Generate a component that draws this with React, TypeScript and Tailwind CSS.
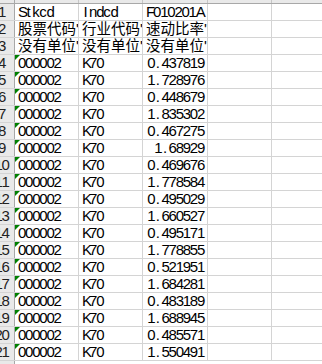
const cols = ["A", "B", "C", "D", "E"];

const values = [
  "0.437819", "1.728976", "0.448679", "1.835302", "0.467275", "1.68929",
  "0.469676", "1.778584", "0.495029", "1.660527", "0.495171", "1.778855",
  "0.521951", "1.684281", "0.483189", "1.688945", "0.485571", "1.550491",
];

type Row = { a: string; b: string; c: string; num?: boolean };

const rows: Row[] = [
  { a: "Stkcd", b: "Indcd", c: "F010201A" },
  { a: "股票代码'", b: "行业代码'", c: "速动比率'" },
  { a: "没有单位'", b: "没有单位'", c: "没有单位'" },
  ...values.map((v) => ({ a: "000002", b: "K70", c: v, num: true })),
];

// half-width latin like the SimSun cells in excel
function Txt({ s }: { s: string }) {
  return (
    <>
      {Array.from(s).map((ch, i) =>
        ch === "'" ? (
          <span key={i} className="inline-block w-[3px]">{ch}</span>
        ) : ch.charCodeAt(0) < 128 ? (
          <span key={i} className="inline-block w-[7.1px] text-center">{ch}</span>
        ) : (
          <span key={i} className="text-[14.5px]">{ch}</span>
        )
      )}
    </>
  );
}

function Cell({ w, s, right, flag }: { w: string; s?: string; right?: boolean; flag?: boolean }) {
  return (
    <div className={`${w} relative shrink-0 h-full border-r border-[#d4d4d4] px-[3px] flex items-end overflow-hidden whitespace-nowrap ${right ? "justify-end" : ""}`}>
      {flag && (
        <div className="absolute left-0 top-0 w-0 h-0 border-t-[5px] border-r-[5px] border-t-[#008000] border-r-transparent" />
      )}
      {s && (
        <span className="leading-[16px]">
          <Txt s={s} />
        </span>
      )}
    </div>
  );
}

export default function App() {
  return (
    <div className="w-[322px] h-[364px] overflow-hidden bg-white text-[15px] text-black" style={{ fontFamily: '"Liberation Sans", Arial, "Noto Sans CJK SC", sans-serif' }}>
      <div className="-mt-[13px] -ml-[11px]">
        {/* column header */}
        <div className="flex h-[17px] bg-[#e9e9e9] border-b border-[#a8a8a8]">
          <div className="w-[26px] shrink-0 border-r border-[#a8a8a8]" />
          {cols.map((c, i) => (
            <div key={c} className={`${i === 2 ? "w-[65px]" : "w-[64px]"} shrink-0 border-r border-[#c6c6c6] flex items-center justify-center text-[#333]`}>
              {c}
            </div>
          ))}
        </div>
        {rows.map((r, i) => (
          <div key={i} className="flex h-[17px] border-b border-[#d4d4d4]">
            <div className="w-[26px] shrink-0 bg-[#e9e9e9] border-r border-[#a8a8a8] flex items-end justify-center leading-[16px] text-[#222]">
              <Txt s={String(i + 1)} />
            </div>
            <Cell w="w-[64px]" flag={r.num} s={r.a} />
            <Cell w="w-[64px]" s={r.b} />
            <Cell w="w-[65px]" right={r.num} s={r.c} />
            <Cell w="w-[64px]" />
            <Cell w="w-[64px]" />
          </div>
        ))}
        <div className="flex h-[17px]">
          <div className="w-[26px] shrink-0 bg-[#e9e9e9] border-r border-[#a8a8a8]" />
        </div>
      </div>
    </div>
  );
}
